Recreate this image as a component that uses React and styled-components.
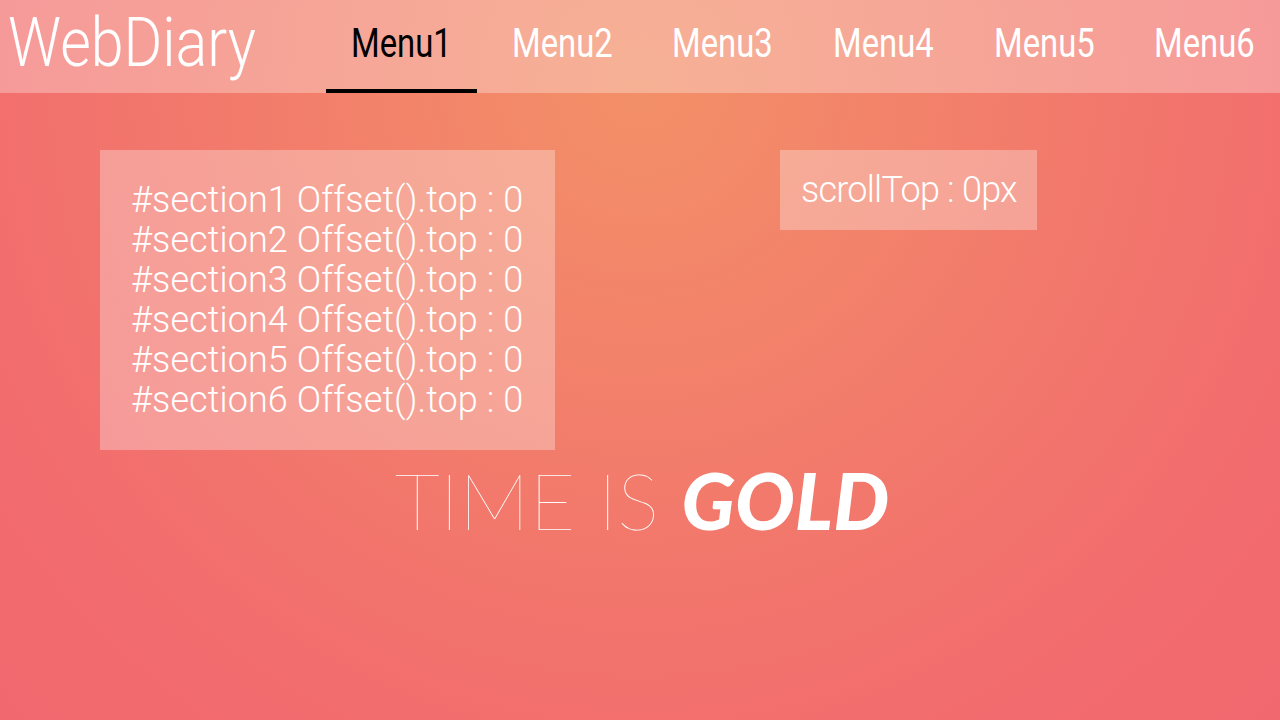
import React from 'react';
import styled, { createGlobalStyle } from 'styled-components';

const GlobalStyle = createGlobalStyle`
  html, body {
    margin: 0;
    padding: 0;
  }
  body {
    font-family: Roboto, "Liberation Sans", Arial, sans-serif;
    background: radial-gradient(circle at 50% 12%, #f39068 0%, #f2766c 55%, #f26c6e 78%, #f2686f 100%);
    min-height: 100vh;
  }
`;

const menus = ['Menu1', 'Menu2', 'Menu3', 'Menu4', 'Menu5', 'Menu6'];

const App = () => {
  return (
    <>
      <GlobalStyle />
      <Page>
        <Header>
          <Logo>
            <Narrow $scale={0.87}>WebDiary</Narrow>
          </Logo>
          <Nav>
            {menus.map((m, i) => (
              <NavItem key={m} $active={i === 0}>
                <Narrow $scale={0.82} $origin="center">{m}</Narrow>
              </NavItem>
            ))}
          </Nav>
        </Header>
        <Boxes>
          <InfoBox $wide>
            {menus.map((m, i) => (
              <Line key={m}>#section{i + 1} Offset().top : 0</Line>
            ))}
          </InfoBox>
          <InfoBox>
            <Line $tight>scrollTop : 0px</Line>
          </InfoBox>
        </Boxes>
        <Slogan>
          <Thin>TIME IS </Thin>
          <Gold>GOLD</Gold>
        </Slogan>
      </Page>
    </>
  );
};

export default App;

const Page = styled.div`
  min-height: 100vh;
  color: #fff;
`;

const Header = styled.header`
  height: 93px;
  background: rgba(255, 255, 255, 0.3);
  display: flex;
  justify-content: space-between;
  align-items: stretch;
`;

// condensed look (no narrow face installed)
const Narrow = styled.span`
  display: inline-block;
  white-space: nowrap;
  transform: scaleX(${(p) => p.$scale});
  transform-origin: ${(p) => p.$origin || 'left'} center;
`;

const Logo = styled.h1`
  margin: 0;
  padding-left: 8px;
  width: 260px;
  font-weight: 300;
  font-size: 68px;
  line-height: 86px;
  color: #fff;
`;

const Nav = styled.nav`
  display: flex;
  gap: 9.6px;
`;

const NavItem = styled.a`
  width: 151px;
  box-sizing: border-box;
  display: flex;
  align-items: center;
  justify-content: center;
  font-size: 40px;
  padding-bottom: 3px;
  color: ${(p) => (p.$active ? '#000' : '#fff')};
  border-bottom: 4px solid ${(p) => (p.$active ? '#000' : 'transparent')};
  cursor: pointer;
`;

const Boxes = styled.section`
  display: flex;
  align-items: flex-start;
  gap: 225px;
  padding: 57px 0 0 100px;
`;

const InfoBox = styled.div`
  box-sizing: border-box;
  width: ${(p) => (p.$wide ? '455px' : '257px')};
  padding: ${(p) => (p.$wide ? '30px 30px 30px 31px' : '20px 21px')};
  background: rgba(255, 255, 255, 0.3);
`;

const Line = styled.div`
  font-size: 36px;
  font-weight: 300;
  line-height: 40px;
  white-space: nowrap;
  letter-spacing: ${(p) => (p.$tight ? '-0.75px' : '0.1px')};
`;

const Slogan = styled.div`
  text-align: center;
  font-family: Lato, sans-serif;
  font-size: 79px;
  line-height: 100px;
  padding-left: 4px;
  color: #fff;
`;

const Thin = styled.span`
  font-weight: 100;
`;

const Gold = styled.span`
  font-weight: 900;
  font-style: italic;
`;
